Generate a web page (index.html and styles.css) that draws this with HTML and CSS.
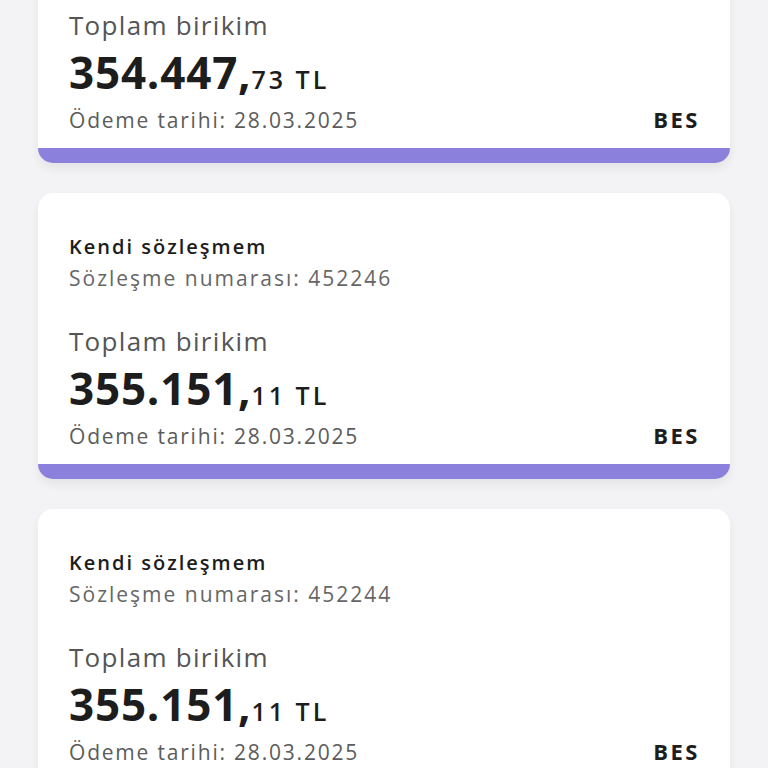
FILE: index.html
```html
<!DOCTYPE html>
<html lang="tr">
<head>
<meta charset="utf-8">
<link rel="stylesheet" href="styles.css">
</head>
<body>
<div class="list">
  <div class="card">
    <div class="meta">
      <div class="title">Kendi sözleşmem</div>
      <div class="sub">Sözleşme numarası: 452248</div>
    </div>
    <div class="label">Toplam birikim</div>
    <div class="amount"><span class="int">354.447,</span><span class="dec">73 TL</span></div>
    <div class="row">
      <span class="date">Ödeme tarihi: 28.03.2025</span>
      <span class="type">BES</span>
    </div>
  </div>
  <div class="card">
    <div class="meta">
      <div class="title">Kendi sözleşmem</div>
      <div class="sub">Sözleşme numarası: 452246</div>
    </div>
    <div class="label">Toplam birikim</div>
    <div class="amount"><span class="int">355.151,</span><span class="dec">11 TL</span></div>
    <div class="row">
      <span class="date">Ödeme tarihi: 28.03.2025</span>
      <span class="type">BES</span>
    </div>
  </div>
  <div class="card">
    <div class="meta">
      <div class="title">Kendi sözleşmem</div>
      <div class="sub">Sözleşme numarası: 452244</div>
    </div>
    <div class="label">Toplam birikim</div>
    <div class="amount"><span class="int">355.151,</span><span class="dec">11 TL</span></div>
    <div class="row">
      <span class="date">Ödeme tarihi: 28.03.2025</span>
      <span class="type">BES</span>
    </div>
  </div>
</div>
</body>
</html>
```
FILE: styles.css
```css
html, body {
  margin: 0;
  padding: 0;
  background: #f3f3f6;
  font-family: "Open Sans", "Noto Sans", sans-serif;
  overflow: hidden;
  height: 768px;
}
.list {
  display: flex;
  flex-direction: column;
  gap: 30px;
  margin-top: -123px;
  padding: 0 38px;
}
.card {
  background: #fff;
  border-radius: 15px;
  border-bottom: 15px solid #8b81dd;
  box-shadow: 0 6px 10px rgba(0,0,0,0.06);
  padding: 40px 30px 0 31px;
  height: 231px;
  display: flex;
  flex-direction: column;
}
.title {
  font-size: 20px;
  line-height: 28px;
  font-weight: 600;
  letter-spacing: 2px;
  color: #1d1d1d;
}
.sub {
  margin-top: 3px;
  font-size: 21px;
  line-height: 28px;
  letter-spacing: 2px;
  color: #666;
}
.label {
  margin-top: 32px;
  font-size: 26px;
  line-height: 34px;
  letter-spacing: 1.3px;
  color: #555;
}
.amount {
  margin-top: 5px;
  line-height: 50px;
  color: #1d1d1d;
}
.int {
  font-size: 44px;
  font-weight: 700;
  letter-spacing: 0.8px;
}
.dec {
  font-size: 25px;
  font-weight: 600;
  letter-spacing: 3px;
}
.row {
  display: flex;
  justify-content: space-between;
  align-items: baseline;
  line-height: 22px;
}
.date {
  font-size: 21px;
  letter-spacing: 1.8px;
  color: #5c5c5c;
}
.type {
  font-size: 22px;
  font-weight: 700;
  letter-spacing: 2.5px;
  color: #1d1d1d;
}
```
